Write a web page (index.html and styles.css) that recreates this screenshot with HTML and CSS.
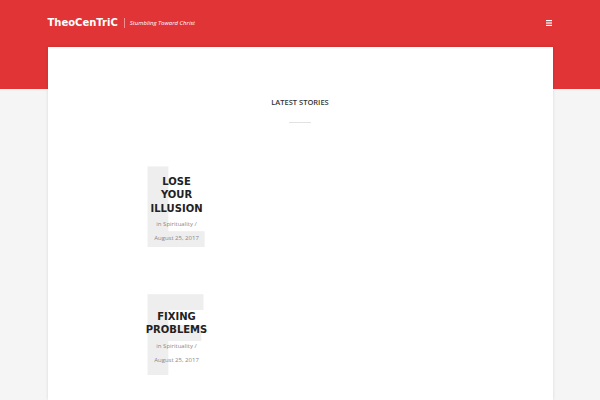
FILE: index.html
```html
<!DOCTYPE html>
<html>
<head>
<meta charset="utf-8">
<link rel="stylesheet" href="styles.css">
</head>
<body>
<header class="masthead">
  <div class="bar">
    <div class="brand">
      <span class="logo">TheoCenTriC</span>
      <span class="sep"></span>
      <span class="tagline">Stumbling Toward Christ</span>
    </div>
    <svg class="menu" width="6" height="6" viewBox="0 0 6 6"><rect x="0" y="0" width="6" height="1.2" fill="#fff"/><rect x="0" y="2.4" width="6" height="1.2" fill="#fff"/><rect x="0" y="4.8" width="6" height="1.2" fill="#fff"/></svg>
  </div>
</header>
<main class="card">
  <h2 class="section-title">LATEST STORIES</h2>
  <div class="divider"></div>
  <div class="posts">
    <article class="post">
      <span class="initial">L</span>
      <div class="post-body">
        <h3 class="post-title">LOSE YOUR ILLUSION</h3>
        <p class="meta"><span class="cat">in Spirituality /</span> <span class="date">August 25, 2017</span></p>
      </div>
    </article>
    <article class="post">
      <span class="initial">F</span>
      <div class="post-body">
        <h3 class="post-title">FIXING PROBLEMS</h3>
        <p class="meta"><span class="cat">in Spirituality /</span> <span class="date">August 25, 2017</span></p>
      </div>
    </article>
  </div>
</main>
</body>
</html>
```
FILE: styles.css
```css
html, body {
  margin: 0;
  padding: 0;
}
body {
  background: #f5f5f5;
  font-family: "Open Sans", "DejaVu Sans", sans-serif;
  height: 400px;
  overflow: hidden;
}
.masthead {
  background: #e03436;
  height: 89px;
}
.bar {
  width: 505px;
  margin: 0 auto;
  padding-top: 17px;
  height: 12px;
  display: flex;
  align-items: center;
  justify-content: space-between;
}
.brand {
  display: flex;
  align-items: center;
}
.logo {
  font-family: "DejaVu Sans", sans-serif;
  font-weight: bold;
  font-size: 10px;
  color: #fff;
  line-height: 12px;
}
.sep {
  width: 1px;
  height: 10px;
  background: rgba(255,255,255,0.45);
  margin: 0 5px 0 6px;
}
.tagline {
  font-style: italic;
  font-size: 6px;
  color: #fff;
}
.menu {
  display: block;
  margin-right: 1px;
}
.card {
  width: 505px;
  margin: -42px auto 0;
  background: #fff;
  box-shadow: 0 0 3px rgba(0,0,0,0.12);
  height: 353px;
  padding-top: 50px;
  box-sizing: border-box;
}
.section-title {
  margin: 0;
  font-family: "Open Sans", sans-serif;
  font-weight: 600;
  font-size: 7.5px;
  line-height: 10px;
  text-align: center;
  color: #333;
}
.divider {
  width: 22px;
  height: 1px;
  background: #e2e2e2;
  margin: 15px auto 0;
}
.posts {
  padding-left: 98px;
  padding-top: 44px;
  display: flex;
  flex-direction: column;
  gap: 47px;
}
.post {
  position: relative;
  width: 62px;
  height: 81px;
  display: flex;
  align-items: center;
}
.initial {
  position: absolute;
  left: -8px;
  top: -13px;
  font-family: "DejaVu Sans", sans-serif;
  font-weight: bold;
  font-size: 110px;
  line-height: 110px;
  color: #eeeeee;
}
.post-body {
  position: relative;
  width: 100%;
  text-align: center;
  padding-top: 5px;
}
.post-title {
  margin: 0;
  font-family: "DejaVu Sans", sans-serif;
  font-weight: bold;
  font-size: 10px;
  line-height: 13.5px;
  color: #222;
}
.meta {
  margin: 2px 0 0;
  font-size: 6px;
  line-height: 14px;
  color: #888;
}
.cat, .date {
  display: block;
  white-space: nowrap;
}
```
